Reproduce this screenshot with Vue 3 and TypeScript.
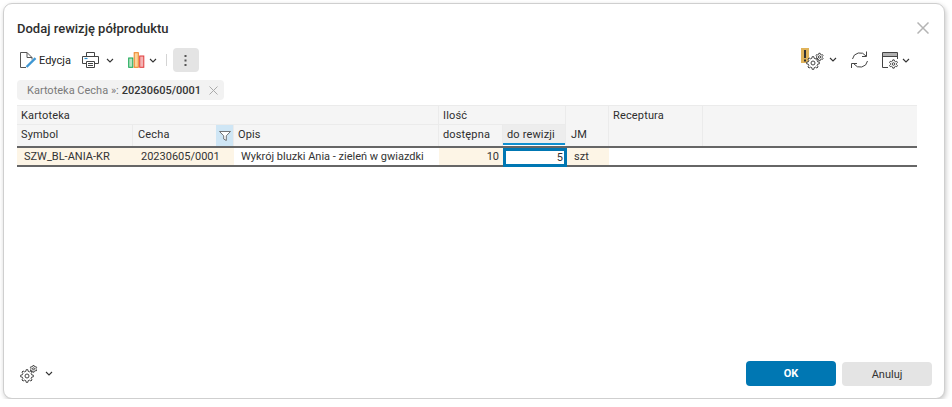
<script setup lang="ts">
interface Col { label: string; cls?: string }
const columns: Col[] = [
  { label: 'Symbol' },
  { label: 'Cecha', cls: 'has-filter' },
  { label: 'Opis' },
  { label: 'dostępna' },
  { label: 'do rewizji', cls: 'active' },
]

function gear(cx: number, cy: number, outer: number, inner: number, teeth: number): string {
  const pts: string[] = []
  const step = (Math.PI * 2) / teeth
  for (let i = 0; i < teeth; i++) {
    const a = i * step - Math.PI / 2
    const w = step * 0.2
    const p = (r: number, t: number) =>
      `${(cx + r * Math.cos(t)).toFixed(2)} ${(cy + r * Math.sin(t)).toFixed(2)}`
    pts.push(p(inner, a - step * 0.32), p(outer, a - w * 0.8), p(outer, a + w * 0.8), p(inner, a + step * 0.32))
  }
  return `M${pts.join('L')}Z`
}

const alertBig = gear(12, 15, 6.4, 4.8, 8)
const alertSmall = gear(18.5, 9, 3.8, 2.8, 6)
const layoutGear = gear(11.5, 12, 4.2, 3.1, 6)
const footBig = gear(7, 11, 6.4, 4.8, 8)
const footSmall = gear(13.5, 3.8, 3.4, 2.5, 6)
</script>

<template>
  <div class="dialog">
    <header class="title-row">
      <h1 class="title">Dodaj rewizję półproduktu</h1>
      <svg class="close" width="12" height="12" viewBox="0 0 12 12"><path d="M.5.5l11 11M11.500.5l-11 11" stroke="#b4b4b4" stroke-width="1.500" fill="none"/></svg>
    </header>

    <div class="toolbar">
      <div class="tools">
        <button class="tool edit">
          <svg width="17" height="17" viewBox="0 0 17 17" fill="none">
            <path d="M6 15.500H.5V.5h6.500l5 5v2" stroke="#555" stroke-width="1"/>
            <path d="M7 .5v5h5" stroke="#555" stroke-width="1"/>
            <path d="M6.500 15l9-8.800" stroke="#3f97d3" stroke-width="2.400"/>
          </svg>
          <span>Edycja</span>
        </button>
        <button class="tool printer">
          <svg width="17" height="16" viewBox="0 0 17 16" fill="none" stroke="#444" stroke-width="1">
            <path d="M4.500 4.500v-4h8v4"/>
            <path d="M4 11.500H.5v-7h16v7H13"/>
            <path d="M4.500 9.500h8v6h-8zM6 11.500h5M6 13.500h5"/>
            <path d="M2.500 6.500h3" stroke="#2a8fd0" stroke-width="1.200"/>
          </svg>
          <svg class="chev" width="8" height="5" viewBox="0 0 8 5"><path d="M1 1l3 3 3-3" stroke="#333" stroke-width="1.100" fill="none"/></svg>
        </button>
        <button class="tool chart">
          <svg width="17" height="16" viewBox="0 0 17 16">
            <rect x=".7" y="6" width="4.100" height="9.300" fill="#b4e4c4" stroke="#15a651"/>
            <rect x="6.200" y=".7" width="4.100" height="14.600" fill="#fbd49b" stroke="#ee7f22"/>
            <rect x="11.700" y="4" width="4.100" height="11.300" fill="#f5b3b3" stroke="#df3b3b"/>
          </svg>
          <svg class="chev" width="8" height="5" viewBox="0 0 8 5"><path d="M1 1l3 3 3-3" stroke="#333" stroke-width="1.100" fill="none"/></svg>
        </button>
        <span class="sep"></span>
        <button class="more">
          <svg width="3" height="11" viewBox="0 0 3 11"><g fill="#555"><rect x=".5" width="2" height="2"/><rect x=".5" y="4.500" width="2" height="2"/><rect x=".5" y="9" width="2" height="2"/></g></svg>
        </button>
      </div>
      <div class="tools right">
        <button class="tool alert">
          <svg width="26" height="22" viewBox="0 0 26 22" fill="none">
            <rect x="0" y="0" width="8" height="15" fill="#e0b35a"/>
            <rect x="3" y="2" width="2" height="8" fill="#333"/>
            <rect x="3" y="11.500" width="2" height="2" fill="#333"/>
            <path :d="alertBig" fill="#fff" stroke="#444"/>
            <circle cx="12" cy="15" r="2" stroke="#444"/>
            <path :d="alertSmall" stroke="#444"/>
            <circle cx="18.500" cy="9" r="1.200" stroke="#444"/>
          </svg>
          <svg class="chev" width="8" height="5" viewBox="0 0 8 5"><path d="M1 1l3 3 3-3" stroke="#333" stroke-width="1.100" fill="none"/></svg>
        </button>
        <button class="tool refresh">
          <svg width="18" height="18" viewBox="0 0 18 18" fill="none" stroke="#444" stroke-width="1">
            <path d="M1.500 8A7.500 7.500 0 0 1 15 5"/>
            <path d="M16.500 10A7.500 7.500 0 0 1 3 13"/>
            <path d="M15.500 .5V5.500H11"/>
            <path d="M.5 17V12.500H6"/>
          </svg>
        </button>
        <button class="tool layout-btn">
          <svg width="18" height="17" viewBox="0 0 18 17" fill="none">
            <path d="M6 15.500H.5V.5h15V7" stroke="#444"/>
            <rect x="1" y="1" width="14" height="3.500" fill="#b0b0b0"/>
            <path d="M.5 4.500h15" stroke="#444"/>
            <path :d="layoutGear" fill="#fff" stroke="#444"/>
            <circle cx="11.500" cy="12" r="1.300" stroke="#444"/>
          </svg>
          <svg class="chev" width="8" height="5" viewBox="0 0 8 5"><path d="M1 1l3 3 3-3" stroke="#333" stroke-width="1.100" fill="none"/></svg>
        </button>
      </div>
    </div>

    <div class="filters">
      <div class="chip">
        <span class="chip-label">Kartoteka Cecha »:</span>
        <b class="chip-value">20230605/0001</b>
        <svg width="9" height="9" viewBox="0 0 9 9"><path d="M.5.5l8 8M8.500.5l-8 8" stroke="#aaa" fill="none"/></svg>
      </div>
    </div>

    <div class="grid">
      <div class="h group g-kart">Kartoteka</div>
      <div class="h group g-ilosc">Ilość</div>
      <div class="h g-jm">JM</div>
      <div class="h g-rec">Receptura</div>
      <div class="h g-rest"></div>

      <div
        v-for="c in columns"
        :key="c.label"
        class="h sub"
        :class="c.cls"
      >
        {{ c.label }}
        <span v-if="c.cls === 'has-filter'" class="filter">
          <svg width="12" height="10" viewBox="0 0 12 10"><path d="M.5.5h11L7.300 4.800V9.500L4.700 8V4.800z" fill="#fff" stroke="#666" stroke-width=".9"/></svg>
        </span>
      </div>

      <div class="rule"></div>

      <div class="c cream sym">SZW_BL-ANIA-KR</div>
      <div class="c cream cecha">20230605/0001</div>
      <div class="c opis">Wykrój bluzki Ania - zieleń w gwiazdki</div>
      <div class="c cream num">10</div>
      <div class="c num edit-cell">5</div>
      <div class="c cream unit">szt</div>
      <div class="c blank"></div>

      <div class="rule"></div>
    </div>

    <footer class="footer">
      <button class="tool foot-tool">
        <svg width="18" height="18" viewBox="0 0 18 18" fill="none">
          <path :d="footBig" stroke="#444"/>
          <circle cx="7" cy="11" r="2" stroke="#444"/>
          <path :d="footSmall" stroke="#444"/>
          <circle cx="13.500" cy="3.800" r="1" stroke="#444"/>
        </svg>
        <svg class="chev foot-chev" width="8" height="5" viewBox="0 0 8 5"><path d="M1 1l3 3 3-3" stroke="#333" stroke-width="1.100" fill="none"/></svg>
      </button>
      <div class="actions">
        <button class="ok">OK</button>
        <button class="cancel">Anuluj</button>
      </div>
    </footer>
  </div>
</template>

<style>
html, body { margin: 0; background: #fff; }
</style>

<style scoped>
* { box-sizing: border-box; }
button { font: inherit; border: 0; background: none; padding: 0; color: inherit; }

.dialog {
  width: 942px;
  height: 396px;
  margin: 3px 0 0 3px;
  background: #fff;
  border: 1px solid #cfcfcf;
  border-radius: 9px;
  box-shadow: 1px 2px 5px rgba(0, 0, 0, .22);
  display: flex;
  flex-direction: column;
  padding: 0 12px 0 13px;
  font-family: Roboto, sans-serif;
  font-size: 11px;
  color: #333;
}

.title-row {
  height: 41px;
  padding-top: 7px;
  display: flex;
  align-items: center;
  justify-content: space-between;
}
.title { margin: 0; font-size: 13px; font-weight: 500; color: #2e2e2e; }
.close { margin-right: 3px; }

.toolbar {
  height: 30px;
  display: flex;
  align-items: center;
  justify-content: space-between;
}
.tools { display: flex; align-items: center; }
.tool { display: flex; align-items: center; }
.edit { margin-left: 3px; gap: 2px; color: #222; }
.printer { margin-left: 11px; gap: 7px; }
.chart { margin-left: 14px; gap: 4px; }
.sep { width: 1px; height: 12px; background: #d4d4d4; margin-left: 9px; }
.more {
  width: 26px; height: 24px; margin-left: 6px;
  background: #e4e4e4; border-radius: 4px;
  display: flex; align-items: center; justify-content: center;
}
.right { margin-right: 22px; }
.alert { gap: 2px; margin-top: -2px; }
.refresh { margin-left: 14px; }
.layout-btn { margin-left: 13px; gap: 2px; }

.filters { height: 30px; display: flex; align-items: flex-start; padding-top: 5px; }
.chip {
  height: 20px; background: #f2f2f2; border-radius: 4px;
  padding: 0 6px 0 10px;
  display: flex; align-items: center; gap: 3px;
  color: #7a7a7a; font-size: 11px;
}
.chip-value { font-weight: 500; color: #333; margin-right: 5px; }

.grid {
  display: grid;
  grid-template-columns: 116px 101px 205px 64px 63px 43px 94px 214px;
  grid-template-rows: 20px 21px 2px 17px 2px;
}
.h { background: #f5f5f5; padding-left: 4px; display: flex; align-items: center; color: #2e2e2e; border-right: 1px solid #ebebeb; border-top: 1px solid #ebebeb; letter-spacing: .15px; }
.group { border-bottom: 1px solid #ebebeb; }
.g-kart { grid-column: 1 / span 3; }
.g-ilosc { grid-column: 4 / span 2; }
.g-jm { grid-column: 6; grid-row: 1 / span 2; align-items: flex-end; padding-bottom: 5px; padding-left: 5px; }
.g-rec { grid-column: 7; grid-row: 1 / span 2; align-items: flex-start; padding-top: 3px; }
.g-rest { grid-column: 8; grid-row: 1 / span 2; border-right: 0; }
.sub { border-top: 0; position: relative; padding-bottom: 2px; }
.has-filter { padding-left: 5px; padding-right: 17px; }
.filter {
  position: absolute; right: 0; top: 0; bottom: 0; width: 17px;
  background: #cfe6f5; display: flex; align-items: center; justify-content: center;
}
.active { background: #ededed; box-shadow: inset 0 -2px 0 #0f8fd0; margin-bottom: 1px; padding-bottom: 1px; }

.rule { grid-column: 1 / -1; background: #666; }

.c { display: flex; align-items: center; padding: 0 7px; color: #333; background: #fff; min-width: 0; white-space: nowrap; }
.cream { background: #fdf5e6; }
.cecha { padding-left: 8px; }
.num { justify-content: flex-end; padding-right: 4px; }
.edit-cell { border: 3px solid #0077b3; margin: 0 -1px -2px 0; padding-right: 1px; position: relative; z-index: 1; }
.unit { padding-left: 8px; }

.footer {
  margin-top: auto;
  padding-bottom: 12px;
  display: flex;
  align-items: flex-end;
  justify-content: space-between;
}
.foot-tool { margin-left: 3px; margin-bottom: 3px; }
.foot-chev { margin-left: 7px; margin-top: -2px; }
.actions { display: flex; align-items: flex-end; gap: 6px; }
.ok {
  width: 90px; height: 25px; border-radius: 4px;
  background: #0077b3; color: #fff; font-weight: 700;
}
.cancel {
  width: 90px; height: 24px; border-radius: 4px;
  background: #e4e4e4; color: #333;
}
</style>
